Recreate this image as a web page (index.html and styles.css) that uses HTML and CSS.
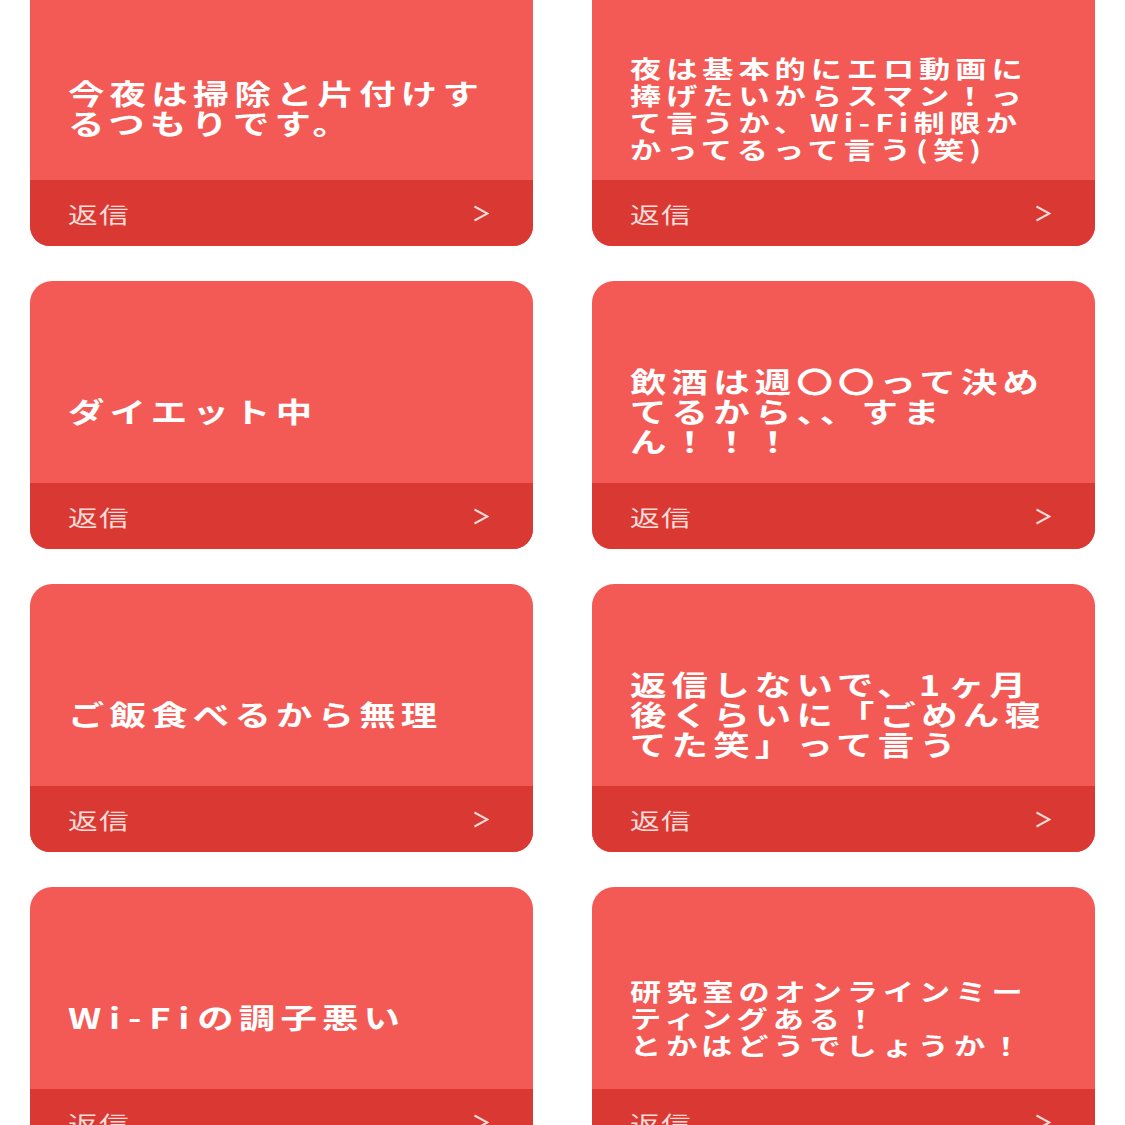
FILE: index.html
```html
<!DOCTYPE html>
<html lang="ja">
<head>
    <meta charset="UTF-8">
    <meta name="viewport" content="width=device-width, initial-scale=1.0">
    <title>返信テンプレート</title>
    <link rel="stylesheet" href="styles.css">
</head>
<body>
    <div class="card-grid">
        <div class="card">
            <div class="card-body">
                <p class="card-text">今夜は掃除と片付けす<br>るつもりです。</p>
            </div>
            <div class="card-footer">
                <span class="reply-label">返信</span>
                <svg class="chevron" viewBox="0 0 16 17"><path d="M1.5 1.5 L14.5 8.5 L1.5 15.5"/></svg>
            </div>
        </div>
        <div class="card">
            <div class="card-body">
                <p class="card-text card-text-small">夜は基本的にエロ動画に<br>捧げたいからスマン！っ<br>て言うか、<span class="latin">Wi-Fi</span>制限か<br>かってるって言う<span class="latin">(</span>笑<span class="latin">)</span></p>
            </div>
            <div class="card-footer">
                <span class="reply-label">返信</span>
                <svg class="chevron" viewBox="0 0 16 17"><path d="M1.5 1.5 L14.5 8.5 L1.5 15.5"/></svg>
            </div>
        </div>
        <div class="card">
            <div class="card-body">
                <p class="card-text">ダイエット中</p>
            </div>
            <div class="card-footer">
                <span class="reply-label">返信</span>
                <svg class="chevron" viewBox="0 0 16 17"><path d="M1.5 1.5 L14.5 8.5 L1.5 15.5"/></svg>
            </div>
        </div>
        <div class="card">
            <div class="card-body">
                <p class="card-text">飲酒は週〇〇って決め<br>てるから、、すま<br>ん！！！</p>
            </div>
            <div class="card-footer">
                <span class="reply-label">返信</span>
                <svg class="chevron" viewBox="0 0 16 17"><path d="M1.5 1.5 L14.5 8.5 L1.5 15.5"/></svg>
            </div>
        </div>
        <div class="card">
            <div class="card-body">
                <p class="card-text">ご飯食べるから無理</p>
            </div>
            <div class="card-footer">
                <span class="reply-label">返信</span>
                <svg class="chevron" viewBox="0 0 16 17"><path d="M1.5 1.5 L14.5 8.5 L1.5 15.5"/></svg>
            </div>
        </div>
        <div class="card">
            <div class="card-body">
                <p class="card-text">返信しないで、<span class="latin">1</span>ヶ月<br>後くらいに「ごめん寝<br>てた笑」って言う</p>
            </div>
            <div class="card-footer">
                <span class="reply-label">返信</span>
                <svg class="chevron" viewBox="0 0 16 17"><path d="M1.5 1.5 L14.5 8.5 L1.5 15.5"/></svg>
            </div>
        </div>
        <div class="card">
            <div class="card-body">
                <p class="card-text"><span class="latin">Wi-Fi</span>の調子悪い</p>
            </div>
            <div class="card-footer">
                <span class="reply-label">返信</span>
                <svg class="chevron" viewBox="0 0 16 17"><path d="M1.5 1.5 L14.5 8.5 L1.5 15.5"/></svg>
            </div>
        </div>
        <div class="card">
            <div class="card-body">
                <p class="card-text card-text-small">研究室のオンラインミー<br>ティングある！<br>とかはどうでしょうか！</p>
            </div>
            <div class="card-footer">
                <span class="reply-label">返信</span>
                <svg class="chevron" viewBox="0 0 16 17"><path d="M1.5 1.5 L14.5 8.5 L1.5 15.5"/></svg>
            </div>
        </div>
    </div>
</body>
</html>
```

FILE: styles.css
```css
body {
    margin: 0;
    background-color: #fff;
    font-family: 'Noto Sans CJK JP', 'Noto Sans', sans-serif;
    overflow: hidden;
}

.card-grid {
    display: grid;
    grid-template-columns: 503px 503px;
    column-gap: 59px;
    row-gap: 35px;
    padding: 0 30px;
    margin-top: -22px;
}

.card {
    height: 268px;
    display: flex;
    flex-direction: column;
    background: #f45a55;
    border-radius: 22px 22px 20px 20px;
    overflow: hidden;
}

.card-body {
    flex: 1;
    display: flex;
    align-items: center;
    padding: 58px 20px 0 38px;
}

.card-text {
    margin: 0;
    color: #fff;
    font-size: 28px;
    font-weight: 700;
    line-height: 30px;
    letter-spacing: 4px;
    white-space: nowrap;
    transform: scaleX(1.3); /* the source is stretched sideways */
    transform-origin: left center;
}

.card-text-small {
    font-size: 24px;
    line-height: 27px;
    letter-spacing: 3.8px;
}

.card-text .latin {
    letter-spacing: 6px;
}

.card-text-small .latin {
    letter-spacing: 4px;
}

.card-footer {
    height: 66px;
    display: flex;
    align-items: center;
    justify-content: space-between;
    padding: 0 44px 0 38px;
    background: #d93932;
}

.reply-label {
    color: #f9dcd9;
    font-size: 22px;
    letter-spacing: 1px;
    transform: scaleX(1.35);
    transform-origin: left center;
}

.chevron {
    width: 16px;
    height: 17px;
    fill: none;
    stroke: #f9dcd9;
    stroke-width: 2;
}
```
